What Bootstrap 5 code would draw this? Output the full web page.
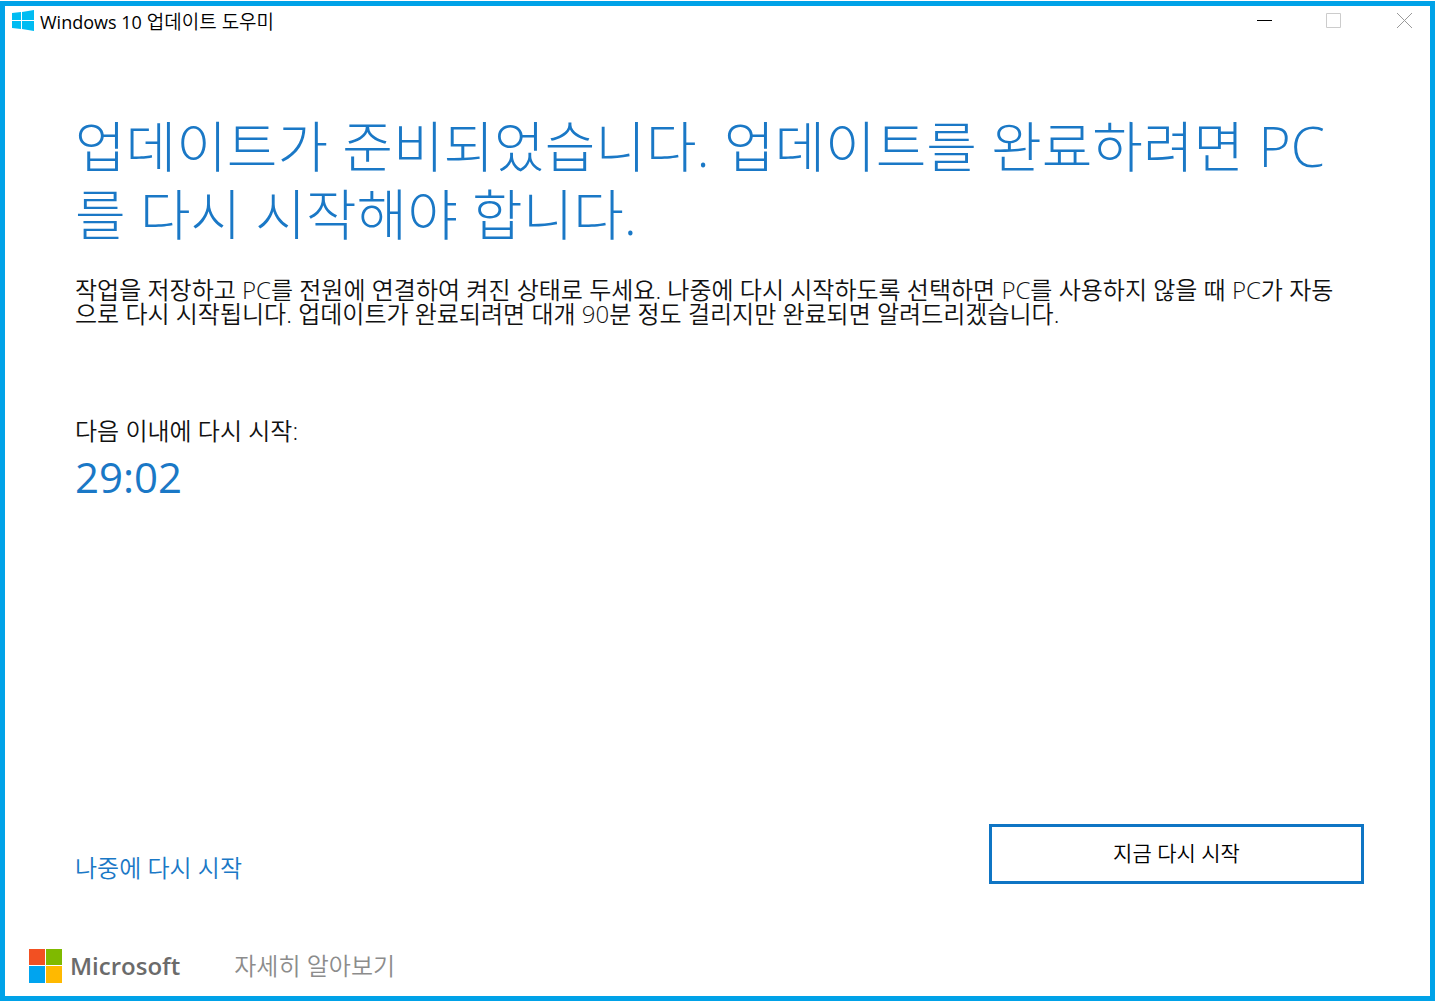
<!DOCTYPE html>
<html lang="ko">
<head>
<meta charset="utf-8">
<meta name="viewport" content="width=device-width, initial-scale=1">
<title>Windows 10 업데이트 도우미</title>
<link href="https://cdn.jsdelivr.net/npm/bootstrap@5.3.0/dist/css/bootstrap.min.css" rel="stylesheet">
<style>
body{font-family:"Open Sans","Noto Sans CJK KR",sans-serif;color:#000;background:#fff}
.app-window{border:5px solid #00a2e8;min-height:calc(100vh - 5px);margin:1px 2px 4px 0}
.title-bar{height:32px;padding:0 15px 0 7px}
.app-name{font-size:19px;line-height:24px;font-weight:350}
.app-name-latin{font-size:18px;font-weight:400}
.caption-group{gap:50px}
.caption-btn{width:20px;height:20px;color:#000}
.caption-btn:disabled{color:#ccc}
.caption-close{color:#999}
.main-area{padding:74px 66px 0 70px}
.headline{font-size:55px;line-height:68px;font-weight:300;color:#1a78c6}
.body-copy{font-size:24px;line-height:24px;font-weight:350;color:#111}
.intro{margin:30px 0 93px}
.timer{font-size:42px;line-height:56px;font-weight:400;color:#1a78c6;margin-top:6px}
.action-link{font-size:24px;line-height:32px;font-weight:350}
.later-link{color:#1a78c6}
.learn-link{color:#8c8c8c}
.restart-btn{width:375px;height:60px;border:3px solid #0f75c4;font-size:21px;font-weight:350;background:#fff;color:#000}
.foot{padding:65px 24px 13px;gap:54px}
.brand{font-size:24px;line-height:34px;font-weight:600;color:#6b6b6b}
</style>
</head>
<body>
<div class="app-window d-flex flex-column">
  <header class="title-bar d-flex align-items-center justify-content-between">
    <div class="d-flex align-items-center">
      <svg class="me-1" width="24" height="24" viewBox="0 0 24 24" fill="#00bcf2" aria-hidden="true">
        <path d="M0 3 9 2v8H0zM10 2l12-2v10H10zM0 11h9v8l-9-1zM10 11h12v10l-12-2z"/>
      </svg>
      <h1 class="app-name m-0"><span class="app-name-latin">Windows 10</span> 업데이트 도우미</h1>
    </div>
    <div class="caption-group d-flex">
      <button type="button" class="caption-btn border-0 bg-transparent p-0 d-flex" aria-label="최소화"><svg width="20" height="20" viewBox="0 0 20 20" stroke="currentColor" fill="none"><path d="M2 8.500h15"/></svg></button>
      <button type="button" class="caption-btn border-0 bg-transparent p-0 d-flex" aria-label="최대화" disabled><svg width="20" height="20" viewBox="0 0 20 20" stroke="currentColor" fill="none"><path d="M1.500 1.500h14v14h-14z"/></svg></button>
      <button type="button" class="caption-btn caption-close border-0 bg-transparent p-0 d-flex" aria-label="닫기"><svg width="20" height="20" viewBox="0 0 20 20" stroke="currentColor" fill="none"><path d="m2 1 15 15M17 1 2 16"/></svg></button>
    </div>
  </header>
  <main class="main-area flex-grow-1 d-flex flex-column">
    <h2 class="headline m-0">업데이트가 준비되었습니다. 업데이트를 완료하려면 PC를 다시 시작해야 합니다.</h2>
    <p class="body-copy intro pe-3">작업을 저장하고 PC를 전원에 연결하여 켜진 상태로 두세요. 나중에 다시 시작하도록 선택하면 PC를 사용하지 않을 때 PC가 자동으로 다시 시작됩니다. 업데이트가 완료되려면 대개 90분 정도 걸리지만 완료되면 알려드리겠습니다.</p>
    <p class="body-copy mb-0">다음 이내에 다시 시작:</p>
    <p class="timer mb-0">29:02</p>
    <div class="d-flex mt-auto justify-content-between align-items-end">
      <a class="action-link later-link text-decoration-none" href="#">나중에 다시 시작</a>
      <button type="button" class="restart-btn">지금 다시 시작</button>
    </div>
  </main>
  <footer class="foot d-flex align-items-center">
    <div class="d-flex align-items-center gap-2">
      <svg width="33" height="34" viewBox="0 0 33 34" aria-hidden="true">
        <path fill="#f25022" d="M0 0h16v16H0z"/><path fill="#7fba00" d="M17 0h16v16H17z"/>
        <path fill="#00a4ef" d="M0 17h16v17H0z"/><path fill="#ffb900" d="M17 17h16v17H17z"/>
      </svg>
      <span class="brand">Microsoft</span>
    </div>
    <a class="action-link learn-link text-decoration-none" href="#">자세히 알아보기</a>
  </footer>
</div>
<script src="https://cdn.jsdelivr.net/npm/bootstrap@5.3.0/dist/js/bootstrap.bundle.min.js"></script>
</body>
</html>
